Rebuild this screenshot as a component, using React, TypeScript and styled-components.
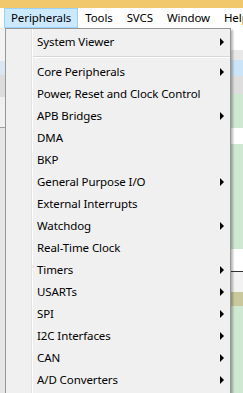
import styled, { createGlobalStyle } from 'styled-components';

const GlobalStyle = createGlobalStyle`
  html, body {
    margin: 0;
    padding: 0;
    overflow: hidden;
  }
  body {
    font-family: "Noto Sans", "Open Sans", sans-serif;
  }
`;

const Screen = styled.div`
  position: relative;
  width: 243px;
  height: 393px;
  overflow: hidden;
  display: flex;
  flex-direction: column;
  background: #f0f0f0;
`;

const TitleBar = styled.div`
  flex-shrink: 0;
  height: 8px;
  background: #f1c86c;
`;

const MenuBar = styled.div`
  flex-shrink: 0;
  height: 20px;
  display: flex;
  align-items: stretch;
  padding-left: 4px;
  overflow: hidden;
  background: #ffffff;
  font-size: 11.5px;
  letter-spacing: -0.1px;
  color: #000;
`;

const MenuBarItem = styled.div<{ $active?: boolean }>`
  display: flex;
  align-items: center;
  padding: 0 6px 1px 6px;
  white-space: nowrap;
  border: 1px solid ${(p) => (p.$active ? '#99d1ff' : 'transparent')};
  background: ${(p) => (p.$active ? '#cce8ff' : 'transparent')};
`;

const Workspace = styled.div`
  flex: 1;
  min-height: 0;
  overflow: hidden;
  display: flex;
  justify-content: space-between;
`;

const Strip = styled.div`
  width: 12px;
  display: flex;
  flex-direction: column;
`;

const Band = styled.div<{ $h: number; $bg: string; $line?: string }>`
  height: ${(p) => p.$h}px;
  background: ${(p) => p.$bg};
  border-bottom: ${(p) => (p.$line ? `1px solid ${p.$line}` : 'none')};
  flex-shrink: 0;
`;

const Dropdown = styled.div`
  position: absolute;
  left: 5px;
  top: 28px;
  width: 224px;
  height: 380px;
  padding-top: 2px;
  background: linear-gradient(
      to right,
      transparent 25px,
      #e2e3e3 25px,
      #e2e3e3 26px,
      #ffffff 26px,
      #ffffff 27px,
      transparent 27px
    ),
    #f0f0f0;
  border: 1px solid #979797;
  box-shadow: 2px 2px 2px rgba(0, 0, 0, 0.28);
  font-size: 11.5px;
  letter-spacing: -0.1px;
  color: #000;
`;

const Item = styled.div`
  height: 22px;
  box-sizing: border-box;
  display: flex;
  align-items: center;
  justify-content: space-between;
  padding: 0 6px 1px 31px;
  white-space: nowrap;
`;

const Separator = styled.div`
  height: 8px;
  display: flex;
  align-items: center;
  padding-left: 27px;

  &::after {
    content: '';
    flex: 1;
    height: 1px;
    background: #d7d7d7;
    border-bottom: 1px solid #ffffff;
  }
`;

const Arrow = styled.span`
  width: 0;
  height: 0;
  border-top: 4px solid transparent;
  border-bottom: 4px solid transparent;
  border-left: 4px solid #000;
`;

const items: Array<{ label: string; sub?: boolean }> = [
  { label: 'Core Peripherals', sub: true },
  { label: 'Power, Reset and Clock Control' },
  { label: 'APB Bridges', sub: true },
  { label: 'DMA' },
  { label: 'BKP' },
  { label: 'General Purpose I/O', sub: true },
  { label: 'External Interrupts' },
  { label: 'Watchdog', sub: true },
  { label: 'Real-Time Clock' },
  { label: 'Timers', sub: true },
  { label: 'USARTs', sub: true },
  { label: 'SPI', sub: true },
  { label: 'I2C Interfaces', sub: true },
  { label: 'CAN', sub: true },
  { label: 'A/D Converters', sub: true },
];

export default function App() {
  return (
    <Screen>
      <GlobalStyle />
      <TitleBar />
      <MenuBar>
        <MenuBarItem $active>Peripherals</MenuBarItem>
        <MenuBarItem>Tools</MenuBarItem>
        <MenuBarItem>SVCS</MenuBarItem>
        <MenuBarItem>Window</MenuBarItem>
        <MenuBarItem>Help</MenuBarItem>
      </MenuBar>
      <Workspace>
        <Strip>
          <Band $h={33} $bg="#f3f3f3" />
          <Band $h={14} $bg="#d9e7f5" />
          <Band $h={22} $bg="#dcdcdc" />
          <Band $h={30} $bg="#f0f0f0" $line="#a0a0a0" />
          <Band $h={300} $bg="#e6e6e6" />
        </Strip>
        <Strip>
          <Band $h={22} $bg="#ffffff" />
          <Band $h={10} $bg="#e8e8e8" />
          <Band $h={16} $bg="#cce4f7" />
          <Band $h={18} $bg="#dedede" />
          <Band $h={34} $bg="#cfe8d1" />
          <Band $h={16} $bg="#ffffff" />
          <Band $h={105} $bg="#cfe8d1" />
          <Band $h={22} $bg="#ffffff" $line="#333" />
          <Band $h={20} $bg="#f2f2f2" />
          <Band $h={14} $bg="#c8c89c" />
          <Band $h={100} $bg="#cfe8d1" />
        </Strip>
      </Workspace>
      <Dropdown>
        <Item>
          System Viewer
          <Arrow />
        </Item>
        <Separator />
        {items.map((it) => (
          <Item key={it.label}>
            {it.label}
            {it.sub && <Arrow />}
          </Item>
        ))}
      </Dropdown>
    </Screen>
  );
}
